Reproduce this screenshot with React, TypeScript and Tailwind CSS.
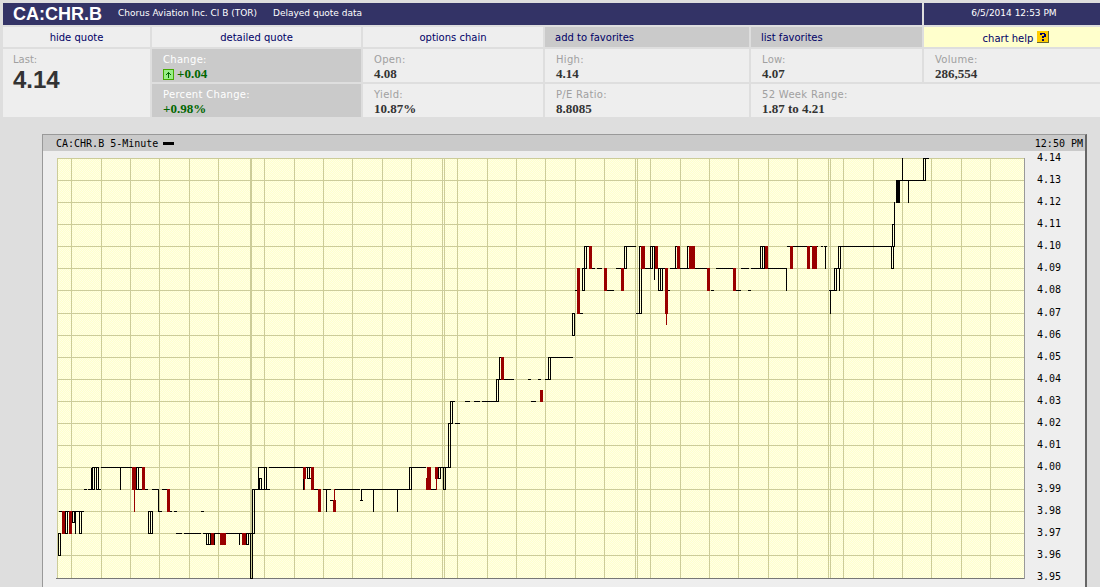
import React from 'react';

const verdana = "font-['DejaVu_Sans',sans-serif]";
const times = "font-['Liberation_Serif',serif]";
const arial = "font-['Liberation_Sans',sans-serif]";
const mono = "font-['DejaVu_Sans_Mono','Liberation_Mono',monospace]";

const priceLabels = [
  '4.14', '4.13', '4.12', '4.11', '4.10', '4.09', '4.08', '4.07', '4.06', '4.05',
  '4.04', '4.03', '4.02', '4.01', '4.00', '3.99', '3.98', '3.97', '3.96', '3.95',
];

const gridX = [
  57, 71, 101, 130, 159, 189, 218, 250, 251, 264, 294, 323, 352, 382, 411, 442, 444, 457, 487, 516,
  545, 575, 604, 635, 637, 650, 680, 709, 738, 768, 797, 828, 830, 843, 873, 902, 931, 961, 990,
];

// [x1, x2, price]
const flats: number[][] = [
  [59, 84, 3.98], [84, 87, 3.99], [88, 92, 3.99], [92, 99, 4.0], [97, 101, 3.99], [101, 133, 4.0],
  [136, 148, 3.99], [137, 145, 4.0], [148, 153, 3.98], [152, 159, 3.99], [158, 162, 3.98], [162, 169, 3.99],
  [169, 172, 3.98], [174, 177, 3.98], [201, 204, 3.98], [176, 182, 3.97], [184, 201, 3.97], [203, 207, 3.97],
  [208, 253, 3.97], [252, 270, 3.99], [258, 267, 4.0], [269, 303, 4.0], [306, 314, 4.0], [313, 318, 3.99],
  [323, 331, 3.99], [330, 334, 3.985], [334, 360, 3.99], [360, 363, 3.985], [361, 412, 3.99], [409, 426, 4.0],
  [431, 437, 3.99], [438, 451, 4.0], [450, 455, 4.03], [455, 460, 4.02], [465, 470, 4.03], [474, 480, 4.03],
  [482, 496, 4.03], [496, 514, 4.04], [528, 531, 4.04], [538, 541, 4.04], [545, 550, 4.04], [531, 536, 4.03],
  [549, 573, 4.05], [575, 577, 4.08], [577, 583, 4.07], [577, 580, 4.09], [584, 592, 4.1], [592, 595, 4.09],
  [597, 602, 4.09], [607, 614, 4.08], [616, 624, 4.09], [624, 636, 4.1], [636, 641, 4.07], [640, 645, 4.1],
  [645, 653, 4.09], [650, 657, 4.1], [658, 665, 4.09], [668, 670, 4.08], [670, 677, 4.09], [675, 680, 4.1],
  [680, 687, 4.09], [687, 695, 4.1], [695, 707, 4.09], [711, 714, 4.08], [716, 733, 4.09], [736, 741, 4.08],
  [741, 749, 4.09], [748, 751, 4.08], [751, 761, 4.09], [760, 768, 4.1], [768, 787, 4.09], [787, 818, 4.1],
  [821, 823, 4.1], [824, 827, 4.1], [829, 836, 4.08], [834, 840, 4.09], [838, 894, 4.1], [896, 925, 4.13],
  [923, 929, 4.14],
];

// [x, high, low]
const wicks: number[][] = [
  [75, 3.98, 3.97], [91, 3.99, 4.0], [120, 4.0, 3.99], [158, 3.99, 3.98], [214, 3.97, 3.965], [239, 3.97, 3.965],
  [258, 4.0, 3.99], [303, 4.0, 3.99], [326, 3.99, 3.98], [361, 3.99, 3.985], [373, 3.99, 3.98], [397, 3.99, 3.98],
  [654, 4.1, 4.085], [786, 4.09, 4.08], [825, 4.1, 4.09], [830, 4.08, 4.07], [839, 4.09, 4.08], [894, 4.12, 4.11],
  [897, 4.13, 4.12], [899, 4.13, 4.12], [902, 4.14, 4.13], [908, 4.13, 4.12],
];

// hollow candles: [x, width, high, low]
const hollow: number[][] = [
  [58, 2, 3.97, 3.96], [65, 2, 3.98, 3.97], [72, 2, 3.98, 3.975], [79, 2, 3.98, 3.97], [92, 2, 4.0, 3.99],
  [96, 2, 4.0, 3.99], [136, 2, 4.0, 3.99], [148, 2, 3.98, 3.97], [150, 2, 3.98, 3.97], [206, 2, 3.97, 3.965],
  [208, 2, 3.97, 3.965], [246, 2, 3.97, 3.965], [250, 2, 3.97, 3.95], [252, 2, 3.99, 3.97], [259, 2, 3.995, 3.99],
  [264, 2, 4.0, 3.99], [307, 2, 4.0, 3.995], [309, 2, 4.0, 3.995], [409, 2, 4.0, 3.99], [438, 2, 4.0, 3.995],
  [443, 2, 4.0, 3.99], [448, 2, 4.02, 4.0], [450, 2, 4.03, 4.02], [496, 2, 4.04, 4.03], [499, 2, 4.05, 4.04],
  [548, 2, 4.05, 4.04], [572, 2, 4.07, 4.06], [582, 2, 4.09, 4.08], [584, 2, 4.1, 4.09], [624, 2, 4.1, 4.09],
  [639, 2, 4.1, 4.07], [650, 2, 4.1, 4.09], [658, 2, 4.09, 4.08], [660, 2, 4.09, 4.08], [675, 2, 4.1, 4.09],
  [687, 2, 4.1, 4.09], [760, 2, 4.1, 4.09], [762, 2, 4.1, 4.09], [834, 2, 4.09, 4.08], [838, 2, 4.1, 4.09],
  [891, 2, 4.1, 4.09], [892, 2, 4.11, 4.1], [896, 2, 4.13, 4.12], [923, 2, 4.14, 4.13],
];

// filled candles: [x, width, high, low]
const red: number[][] = [
  [62, 3, 3.98, 3.97], [69, 3, 3.98, 3.97], [132, 4, 4.0, 3.99], [142, 3, 4.0, 3.99], [167, 3, 3.99, 3.98],
  [211, 3, 3.97, 3.965], [220, 6, 3.97, 3.965], [242, 4, 3.97, 3.965], [303, 3, 4.0, 3.995], [311, 3, 4.0, 3.99],
  [318, 3, 3.99, 3.98], [333, 3, 3.985, 3.98], [427, 4, 4.0, 3.99], [426, 1, 3.995, 3.99], [435, 3, 4.0, 3.995],
  [501, 3, 4.05, 4.04], [540, 3, 4.035, 4.03], [577, 3, 4.09, 4.07], [589, 3, 4.1, 4.09], [604, 3, 4.09, 4.08],
  [621, 3, 4.09, 4.08], [641, 4, 4.1, 4.09], [655, 3, 4.1, 4.09], [665, 3, 4.09, 4.07], [677, 3, 4.1, 4.09],
  [689, 6, 4.1, 4.09], [707, 3, 4.09, 4.08], [733, 3, 4.09, 4.08], [765, 3, 4.1, 4.09], [790, 3, 4.1, 4.09],
  [807, 3, 4.1, 4.09], [812, 5, 4.1, 4.09],
];

// thin red wicks: [x, high, low]
const redWicks: number[][] = [
  [134, 3.99, 3.98], [304, 3.995, 3.99], [334, 3.99, 3.985], [436, 4.0, 3.99], [666, 4.07, 4.065],
];

const py = (p: number) => Math.round(158 + 2208 * (4.14 - p));

const PriceChart = () => (
  <svg width="970" height="423" viewBox="56 157 970 423" shapeRendering="crispEdges" className="shrink-0">
    <defs>
      <pattern id="dither" x="0" y="0" width="2" height="2" patternUnits="userSpaceOnUse">
        <rect width="2" height="2" fill="#ffffcc" />
        <rect width="1" height="1" fill="#ffffe6" />
        <rect x="1" y="1" width="1" height="1" fill="#ffffe6" />
      </pattern>
    </defs>
    <rect x="57" y="158" width="967" height="420" fill="url(#dither)" />
    {gridX.map((x, i) => (
      <line key={i} x1={x + 0.5} x2={x + 0.5} y1={158} y2={578} stroke="#cccc99" />
    ))}
    {priceLabels.map((p) => (
      <line key={p} x1={57} x2={1024} y1={py(+p) + 0.5} y2={py(+p) + 0.5} stroke="#cccc99" />
    ))}
    <line x1={56} x2={1025} y1={578.5} y2={578.5} stroke="#777777" />
    <line x1={1024.5} x2={1024.5} y1={158} y2={579} stroke="#999999" />
    {flats.map(([a, b, p], i) => (
      <line key={i} x1={a} x2={b} y1={py(p) + 0.5} y2={py(p) + 0.5} stroke="#000000" />
    ))}
    {hollow.map(([x, w, hi, lo], i) => (
      <rect key={i} x={x + 0.5} y={py(hi) + 0.5} width={w} height={py(lo) - py(hi)} fill="none" stroke="#000000" />
    ))}
    {wicks.map(([x, hi, lo], i) => (
      <line key={i} x1={x + 0.5} x2={x + 0.5} y1={py(hi)} y2={py(lo) + 1} stroke="#000000" />
    ))}
    {red.map(([x, w, hi, lo], i) => (
      <rect key={i} x={x} y={py(hi)} width={w} height={py(lo) - py(hi) + 1} fill="#990000" />
    ))}
    {redWicks.map(([x, hi, lo], i) => (
      <line key={i} x1={x + 0.5} x2={x + 0.5} y1={py(hi)} y2={py(lo) + 1} stroke="#990000" />
    ))}
  </svg>
);

const UpIcon = () => (
  <svg width="11" height="11" viewBox="0 0 11 11" shapeRendering="crispEdges" className="mr-[3px] shrink-0">
    <rect x="0.5" y="0.5" width="10" height="10" fill="#99ee88" stroke="#44aa00" />
    <path d="M5 3h1v6H5zM4 4h3v1H4zM3 5h1v1H3zM7 5h1v1H7z" fill="#006600" />
  </svg>
);

const HelpIcon = () => (
  <svg width="12" height="12" viewBox="0 0 12 12" shapeRendering="crispEdges" className="ml-[4px] mb-[3px] shrink-0">
    <rect x="0" y="0" width="12" height="12" fill="#666633" />
    <rect x="0" y="0" width="11" height="11" fill="#ffcc00" />
    <path d="M3 2h5v1h1v3H7v1H5V5h2V3H5v1H3zM5 8h2v2H5z" fill="#000066" />
  </svg>
);

const QuoteCell = ({
  label,
  children,
  active,
  className = '',
}: {
  label: string;
  children: React.ReactNode;
  active?: boolean;
  className?: string;
}) => (
  <div className={`${active ? 'bg-[#cacaca]' : 'bg-[#eeeeee]'} pl-[11px] pt-[5px] ${className}`}>
    <div className={`${verdana} text-[10px] leading-[12px] tracking-[0.3px] ${active ? 'text-white' : 'text-[#a0a0a0]'}`}>
      {label}
    </div>
    <div className={`${times} mt-[1px] flex items-center text-[13px] leading-[14px] font-bold ${active ? 'text-[#006600]' : 'text-[#333333]'}`}>
      {children}
    </div>
  </div>
);

const NavCell = ({ children, active, left }: { children: string; active?: boolean; left?: boolean }) => (
  <div
    className={`flex items-center ${left ? 'pl-[10px]' : 'justify-center'} ${verdana} text-[10px] text-[#000066] ${
      active ? 'bg-[#cacaca]' : 'bg-[#eeeeee]'
    }`}
  >
    {children}
  </div>
);

export default function App() {
  return (
    <div className="flex h-[587px] w-[1100px] flex-col overflow-hidden bg-[#dedede] pt-[3px]">
      {/* quote header */}
      <div className="ml-[3px] grid grid-cols-[147px_209px_180px_204px_171px_176px] grid-rows-[22px_20px_33px_33px] gap-[2px]">
        <div className="col-span-5 flex items-center bg-[#333366] pl-[10px] text-white">
          <span className={`${arial} w-[105px] text-[18px] leading-none font-bold`}>CA:CHR.B</span>
          <span className={`${verdana} w-[155px] text-[9px]`}>Chorus Aviation Inc. Cl B (TOR)</span>
          <span className={`${verdana} text-[9px]`}>Delayed quote data</span>
        </div>
        <div className={`flex items-center justify-center bg-[#333366] pl-[4px] ${verdana} text-[9px] text-white`}>
          6/5/2014 12:53 PM
        </div>

        <NavCell>hide quote</NavCell>
        <NavCell>detailed quote</NavCell>
        <NavCell>options chain</NavCell>
        <NavCell active left>add to favorites</NavCell>
        <NavCell active left>list favorites</NavCell>
        <div className={`flex items-center justify-center bg-[#ffffcc] pt-[2px] pl-[8px] ${verdana} text-[10px] text-[#000066]`}>
          chart help
          <HelpIcon />
        </div>

        <div className="row-span-2 bg-[#eeeeee] pt-[5px] pl-[10px]">
          <div className={`${verdana} text-[10px] leading-[12px] text-[#a0a0a0]`}>Last:</div>
          <div className={`${arial} mt-[1px] text-[24px] leading-[26px] font-bold text-[#333333]`}>4.14</div>
        </div>
        <QuoteCell label="Change:" active>
          <UpIcon />
          +0.04
        </QuoteCell>
        <QuoteCell label="Open:">4.08</QuoteCell>
        <QuoteCell label="High:">4.14</QuoteCell>
        <QuoteCell label="Low:">4.07</QuoteCell>
        <QuoteCell label="Volume:">286,554</QuoteCell>

        <QuoteCell label="Percent Change:" active>+0.98%</QuoteCell>
        <QuoteCell label="Yield:">10.87%</QuoteCell>
        <QuoteCell label="P/E Ratio:">8.8085</QuoteCell>
        <QuoteCell label="52 Week Range:" className="col-span-2">1.87 to 4.21</QuoteCell>
      </div>

      {/* chart panel */}
      <div className="mt-[17px] ml-[42px] flex w-[1045px] flex-1 flex-col border-t border-r-2 border-l border-t-[#999999] border-r-[#666666] border-l-[#999999] bg-[#eeeeee]">
        <div className={`flex h-[16px] shrink-0 items-center justify-between bg-[#cacaca] pr-[2px] pl-[13px] ${mono} text-[10px] text-black`}>
          <span className="flex items-center">
            CA:CHR.B 5-Minute
            <span className="ml-[5px] h-[3px] w-[11px] bg-black" />
          </span>
          <span>12:50 PM</span>
        </div>
        <div className="flex flex-1 pt-[6px] pl-[13px]">
          <PriceChart />
          <div className={`-mt-[6px] ml-[11px] flex flex-col gap-[8.08px] ${mono} text-[10px] text-black`}>
            {priceLabels.map((p) => (
              <div key={p} className="h-[14px] leading-[14px]">
                {p}
              </div>
            ))}
          </div>
        </div>
      </div>
    </div>
  );
}
